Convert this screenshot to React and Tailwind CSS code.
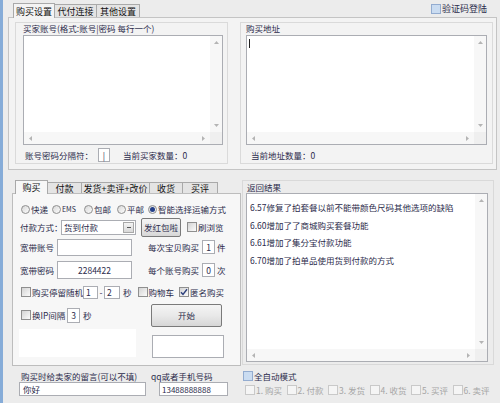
import React from "react";

const Tri = ({ dir }) => {
    const pts = {
        up: "0,4 2.5,1 5,4",
        down: "0,1 2.5,4 5,1",
        left: "4,0 1,2.5 4,5",
        right: "1,0 4,2.5 1,5",
    }[dir];
    return (
        <svg width="5" height="5" viewBox="0 0 5 5" className="shrink-0">
            <polygon points={pts} fill="#b4b4b4" />
        </svg>
    );
};

const ScrollBox = ({ className, children }) => (
    <div className={`flex shrink-0 flex-col border border-[#abadb3] bg-white ${className}`}>
        <div className="flex min-h-0 flex-1">
            <div className="min-w-0 flex-1 overflow-hidden">{children}</div>
            <div className="flex w-[12px] flex-col items-center justify-between bg-[#f7f7f7] py-[4px]">
                <Tri dir="up" />
                <Tri dir="down" />
            </div>
        </div>
        <div className="flex h-[12px]">
            <div className="flex flex-1 items-center justify-between bg-[#f7f7f7] px-[4px]">
                <Tri dir="left" />
                <Tri dir="right" />
            </div>
            <div className="w-[12px] bg-[#efefef]" />
        </div>
    </div>
);

const Check = ({ checked = false, tint = false, dim = false }) => (
    <span
        className={`flex h-[10px] w-[10px] shrink-0 items-center justify-center border ${
            dim
                ? "border-[#c9c9c9] bg-[#f5f5f5]"
                : tint
                ? "border-[#93acd0] bg-[#cadcf1]"
                : "border-[#8f8f8f] bg-linear-to-br from-[#d4d4d4] to-[#fbfbfb]"
        }`}
    >
        {checked && (
            <svg width="8" height="8" viewBox="0 0 8 8">
                <path d="M1 4.2 L3 6.5 L7 1.3" fill="none" stroke="#2c3f7c" strokeWidth="1.4" />
            </svg>
        )}
    </span>
);

const CheckLabel = ({ children, className = "", ...props }) => (
    <div className={`flex shrink-0 items-center gap-[1px] whitespace-nowrap ${className}`}>
        <Check {...props} />
        <span>{children}</span>
    </div>
);

const Radio = ({ on = false }) => (
    <span className="flex h-[9px] w-[9px] shrink-0 items-center justify-center rounded-full border border-[#8f8f8f] bg-linear-to-br from-[#d8d8d8] to-[#fcfcfc]">
        {on && <span className="h-[5px] w-[5px] rounded-full bg-[#24408a]" />}
    </span>
);

const Field = ({ className = "", children }) => (
    <div className={`flex shrink-0 items-center border border-[#abadb3] bg-white ${className}`}>
        {children}
    </div>
);

const WinButton = ({ className = "", children }) => (
    <div
        className={`flex shrink-0 items-center justify-center rounded-[2px] border border-[#7a7a7a] bg-linear-to-b from-[#f4f4f4] via-[#e9e9e9] to-[#d6d6d6] ${className}`}
    >
        {children}
    </div>
);

const results = [
    "6.57修复了拍套餐以前不能带颜色尺码其他选项的缺陷",
    "6.60增加了了商城购买套餐功能",
    "6.61增加了集分宝付款功能",
    "6.70增加了拍单品使用货到付款的方式",
];

const steps = ["1. 购买", "2. 付款", "3. 发货", "4. 收货", "5. 买评", "6. 卖评"];

export default function App() {
    return (
        <div className="flex h-[403px] w-[500px] flex-col overflow-hidden border-l-[3px] border-[#86acd8] bg-[#ececec] font-['Noto_Sans_CJK_SC','Noto_Sans',sans-serif] text-[8.5px] leading-[11px] text-[#2b2b4b]">
            {/* top tabs */}
            <div className="flex h-[17px] shrink-0 items-end text-[9px]">
                <div className="ml-[10px] flex items-end">
                    <div className="relative z-10 -mb-px flex h-[15px] w-[42px] items-center justify-center border border-b-0 border-[#a9a9a9] bg-[#f4f4f4] text-[#111]">
                        购买设置
                    </div>
                    <div className="flex h-[13px] w-[42px] items-center justify-center border border-b-0 border-l-0 border-[#a9a9a9] bg-[#e4e4e4] text-[#111]">
                        代付连接
                    </div>
                    <div className="flex h-[13px] w-[43px] items-center justify-center border border-b-0 border-l-0 border-[#a9a9a9] bg-[#e4e4e4] text-[#111]">
                        其他设置
                    </div>
                </div>
                <CheckLabel tint className="mb-auto ml-auto mr-[13px] mt-[3px]">
                    验证码登陆
                </CheckLabel>
            </div>

            {/* top panel */}
            <div className="ml-[5px] flex h-[153px] w-[489px] shrink-0 border border-[#c4c4c4] bg-[#f3f3f3] pl-[6px] pt-[4px]">
                <div className="flex h-[142px] w-[213px] flex-col border border-[#dadada] pl-[7px]">
                    <div className="h-[11px] whitespace-nowrap">买家账号(格式:账号|密码 每行一个)</div>
                    <ScrollBox className="mt-px h-[110px] w-[200px]" />
                    <div className="mt-[3px] flex h-[14px] items-center pl-[2px]">
                        <span className="w-[73px] whitespace-nowrap">账号密码分隔符：</span>
                        <Field className="h-[14px] w-[12px] justify-center">|</Field>
                        <span className="ml-[13px] whitespace-nowrap">当前买家数量：0</span>
                    </div>
                </div>
                <div className="ml-[12px] flex h-[142px] w-[253px] flex-col border border-[#dadada] pl-[5px]">
                    <div className="h-[11px]">购买地址</div>
                    <ScrollBox className="mt-px h-[110px] w-[241px]">
                        <div className="ml-[2px] mt-[3px] h-[9px] w-px bg-[#222]" />
                    </ScrollBox>
                    <div className="mt-[5px] pl-[5px]">当前地址数量：0</div>
                </div>
            </div>

            {/* lower area */}
            <div className="mt-[10px] flex">
                {/* left column */}
                <div className="ml-[9px] flex w-[229px] shrink-0 flex-col">
                    <div className="flex h-[13px] items-end pl-[3px] text-[9px]">
                        <div className="relative z-10 -mb-px flex h-[14px] w-[33px] items-center justify-center border border-b-0 border-[#a9a9a9] bg-[#f7f7f7] text-[#111]">
                            购买
                        </div>
                        <div className="flex h-[11px] w-[34px] items-center justify-center border border-b-0 border-l-0 border-[#a9a9a9] bg-[#e4e4e4] text-[#111]">
                            付款
                        </div>
                        <div className="flex h-[11px] w-[68px] items-center justify-center whitespace-nowrap border border-b-0 border-l-0 border-[#a9a9a9] bg-[#e4e4e4] text-[#111]">
                            发货+卖评+改价
                        </div>
                        <div className="flex h-[11px] w-[33px] items-center justify-center border border-b-0 border-l-0 border-[#a9a9a9] bg-[#e4e4e4] text-[#111]">
                            收货
                        </div>
                        <div className="flex h-[11px] w-[35px] items-center justify-center border border-b-0 border-l-0 border-[#a9a9a9] bg-[#e4e4e4] text-[#111]">
                            买评
                        </div>
                    </div>

                    <div className="flex h-[173px] flex-col border border-[#bdbdbd] bg-[#f7f7f7]">
                        <div className="mt-[8px] flex h-[14px] items-center pl-[8px]">
                            <div className="flex w-[31px] items-center gap-[1px]">
                                <Radio />快递
                            </div>
                            <div className="flex w-[32px] items-center gap-[1px]">
                                <Radio />
                                <span className="text-[7px]">EMS</span>
                            </div>
                            <div className="flex w-[33px] items-center gap-[1px]">
                                <Radio />包邮
                            </div>
                            <div className="flex w-[31px] items-center gap-[1px]">
                                <Radio />平邮
                            </div>
                            <div className="flex items-center gap-[1px] whitespace-nowrap">
                                <Radio on />智能选择运输方式
                            </div>
                        </div>

                        <div className="mt-px flex h-[20px] items-center pl-[7px]">
                            <span className="w-[41px] whitespace-nowrap">付款方式：</span>
                            <Field className="h-[15px] w-[75px] justify-between pl-[2px] pr-px">
                                <span>货到付款</span>
                                <span className="flex h-[11px] w-[11px] items-center justify-center border border-[#a8a8a8] bg-linear-to-b from-[#f4f4f4] to-[#d8d8d8]">
                                    <span className="h-px w-[4px] bg-[#555]" />
                                </span>
                            </Field>
                            <WinButton className="ml-[5px] h-[19px] w-[40px]">发红包啦</WinButton>
                            <CheckLabel className="ml-[6px]">刷浏览</CheckLabel>
                        </div>

                        <div className="mt-px flex h-[18px] items-center">
                            <span className="w-[44px] pl-[7px]">宽带账号</span>
                            <Field className="h-[17px] w-[75px]" />
                            <span className="ml-[16px] w-[54px] whitespace-nowrap">每次宝贝购买</span>
                            <Field className="h-[14px] w-[13px] justify-center">1</Field>
                            <span className="ml-[2px]">件</span>
                        </div>

                        <div className="mt-[5px] flex h-[18px] items-center">
                            <span className="w-[44px] pl-[7px]">宽带密码</span>
                            <Field className="h-[18px] w-[75px] justify-center">2284422</Field>
                            <span className="ml-[16px] w-[54px] whitespace-nowrap">每个账号购买</span>
                            <Field className="h-[14px] w-[13px] justify-center">0</Field>
                            <span className="ml-[2px]">次</span>
                        </div>

                        <div className="mt-[6px] flex h-[14px] items-center pl-[8px]">
                            <CheckLabel className="w-[62px]">购买停留随机</CheckLabel>
                            <Field className="h-[13px] w-[15px] pl-[2px]">1</Field>
                            <span className="w-[6px] text-center">-</span>
                            <Field className="h-[13px] w-[16px] pl-[2px]">2</Field>
                            <span className="ml-[3px]">秒</span>
                            <CheckLabel className="ml-[6px]">购物车</CheckLabel>
                            <CheckLabel checked className="ml-[5px]">
                                匿名购买
                            </CheckLabel>
                        </div>

                        <div className="mt-[4px] flex h-[24px] items-center">
                            <div className="flex w-[138px] items-center pl-[8px]">
                                <CheckLabel className="w-[46px]">换IP间隔</CheckLabel>
                                <Field className="h-[15px] w-[13px] justify-center">3</Field>
                                <span className="ml-[3px]">秒</span>
                            </div>
                            <WinButton className="h-[23px] w-[71px]">开始</WinButton>
                        </div>

                        <div className="mt-[2px] flex h-[29px] items-end">
                            <div className="mb-auto ml-[6px] h-[28px] w-[117px] bg-white" />
                            <Field className="ml-[16px] h-[23px] w-[72px]" />
                        </div>
                    </div>

                    <div className="mt-[5px] flex h-[11px] items-center">
                        <span className="w-[139px] whitespace-nowrap pl-[9px]">购买时给卖家的留言(可以不填)</span>
                        <span>qq或者手机号码</span>
                    </div>
                    <div className="flex h-[14px] items-center">
                        <Field className="ml-[7px] h-[14px] w-[127px] pl-[3px]">你好</Field>
                        <Field className="ml-[13px] h-[14px] w-[69px] pl-[2px] text-[8px]">13488888888</Field>
                    </div>
                </div>

                {/* right column */}
                <div className="ml-px flex w-[252px] shrink-0 flex-col">
                    <div className="flex h-[185px] flex-col border border-[#d9d9d9] pl-[3px]">
                        <div className="h-[12px] pl-px pt-px">返回结果</div>
                        <ScrollBox className="h-[169px] w-[242px]">
                            <div className="whitespace-nowrap pl-[3px] pt-[5px] leading-[17.5px]">
                                {results.map((line) => (
                                    <div key={line}>{line}</div>
                                ))}
                            </div>
                        </ScrollBox>
                    </div>
                    <CheckLabel tint className="ml-px mt-[6px] h-[10px]">
                        全自动模式
                    </CheckLabel>
                    <div className="mt-[4px] flex h-[10px] items-center pl-[3px] text-[#a6a6a6]">
                        {steps.map((s) => (
                            <CheckLabel key={s} dim className="w-[41.5px]">
                                {s}
                            </CheckLabel>
                        ))}
                    </div>
                </div>
            </div>
        </div>
    );
}
